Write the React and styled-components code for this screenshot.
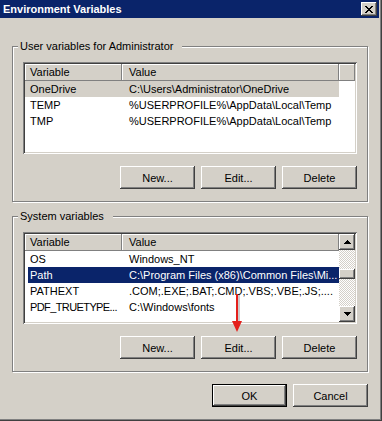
import React from 'react';
import styled, { createGlobalStyle, css } from 'styled-components';

const GlobalStyle = createGlobalStyle`
  html, body {
    margin: 0;
    padding: 0;
    background: #d4d0c8;
  }
  body {
    font-family: "Liberation Sans", Arial, sans-serif;
    font-size: 11px;
    color: #000;
  }
`;

const raised = css`
  box-shadow: inset -1px -1px #404040, inset 1px 1px #fff,
    inset -2px -2px #808080, inset 2px 2px #d4d0c8;
`;

const Window = styled.div`
  position: relative;
  width: 382px;
  height: 421px;
  box-sizing: border-box;
  padding: 0 3px 3px 0;
  background: #d4d0c8;
  box-shadow: inset -1px -1px #404040, inset -2px -2px #808080;
  display: flex;
  flex-direction: column;
  overflow: hidden;
`;

const TitleBar = styled.div`
  height: 18px;
  flex: none;
  display: flex;
  align-items: center;
  justify-content: space-between;
  padding: 0 2px 0 3px;
  background: #0a246a;
  color: #fff;
  font-weight: bold;
  font-size: 11px;
`;

const CloseButton = styled.button`
  width: 16px;
  height: 14px;
  padding: 0;
  border: 0;
  background: #d4d0c8;
  ${raised};
  display: flex;
  align-items: center;
  justify-content: center;
`;

const Body = styled.div`
  padding: 22px 11px 0 12px;
  display: flex;
  flex-direction: column;
`;

const Group = styled.fieldset`
  margin: 0 0 ${(p) => p.$gap || 0}px;
  padding: 9px 10px 12px;
  border: 1px solid #808080;
  box-shadow: inset 1px 1px #fff, 1px 1px #fff;
  min-width: 0;
`;

const Legend = styled.legend`
  margin-left: -5px;
  padding: 0 9px 0 2px;
  background: #d4d0c8;
  line-height: 13px;
  font-size: 11px;
`;

const ListView = styled.div`
  height: 92px;
  box-sizing: border-box;
  padding: 2px;
  background: #fff;
  box-shadow: inset 1px 1px #808080, inset -1px -1px #fff,
    inset 2px 2px #404040, inset -2px -2px #d4d0c8;
  display: flex;
`;

const ListBody = styled.div`
  flex: 1;
  min-width: 0;
  display: flex;
  flex-direction: column;
`;

const HeaderRow = styled.div`
  height: 17px;
  flex: none;
  display: flex;
`;

const HeaderCell = styled.div`
  width: ${(p) => p.$w || 0}px;
  flex: ${(p) => (p.$fill ? 1 : 'none')};
  box-sizing: border-box;
  padding-left: ${(p) => p.$pad || 0}px;
  background: #d4d0c8;
  box-shadow: inset -1px -1px #808080, inset 1px 1px #fff;
  line-height: 16px;
  white-space: nowrap;
  overflow: hidden;
`;

const Row = styled.div`
  display: flex;
  height: 16px;
  line-height: 16px;
  width: 314px;
  ${(p) =>
    p.$state === 'inactive' &&
    css`
      background: #d4d0c8;
    `}
  ${(p) =>
    p.$state === 'focus' &&
    css`
      margin-left: 3px;
      width: 311px;
      background: #0a246a;
      color: #fff;
      & > :first-child {
        margin-left: -3px;
      }
    `}
`;

const Cell = styled.div`
  width: ${(p) => p.$w}px;
  flex: none;
  box-sizing: border-box;
  padding-left: ${(p) => p.$pad}px;
  white-space: nowrap;
  overflow: hidden;
  letter-spacing: ${(p) => (p.$tight ? '-0.6px' : 'normal')};
`;

const ScrollBar = styled.div`
  width: 16px;
  flex: none;
  display: flex;
  flex-direction: column;
  background: repeating-conic-gradient(#d4d0c8 0 25%, #fff 0 50%) 0 0 / 2px 2px;
`;

const ScrollButton = styled.div`
  width: 16px;
  height: 16px;
  flex: none;
  background: #d4d0c8;
  ${raised};
  display: flex;
  align-items: center;
  justify-content: center;
`;

const Track = styled.div`
  flex: 1;
`;

const Thumb = styled.div`
  height: 10px;
  background: #d4d0c8;
  ${raised};
`;

const ButtonRow = styled.div`
  display: flex;
  justify-content: flex-end;
  gap: 6px;
  margin-top: 12px;
`;

const Button = styled.button`
  width: 75px;
  height: 23px;
  box-sizing: border-box;
  padding: 0;
  border: 0;
  background: #d4d0c8;
  font-family: "Liberation Sans", Arial, sans-serif;
  font-size: 11px;
  color: #000;
  ${raised};
  ${(p) =>
    p.$default &&
    css`
      border: 1px solid #000;
      box-shadow: inset -1px -1px #404040, inset 1px 1px #fff,
        inset -2px -2px #808080;
    `}
`;

const Pointer = styled.svg`
  position: absolute;
  left: 230px;
  top: 294px;
`;

const COLS = [
  { w: 97, pad: 5 },
  { w: 217, pad: 7 },
];

const userVars = [
  { name: 'OneDrive', value: 'C:\\Users\\Administrator\\OneDrive', state: 'inactive' },
  { name: 'TEMP', value: '%USERPROFILE%\\AppData\\Local\\Temp' },
  { name: 'TMP', value: '%USERPROFILE%\\AppData\\Local\\Temp' },
];

const systemVars = [
  { name: 'OS', value: 'Windows_NT' },
  { name: 'Path', value: 'C:\\Program Files (x86)\\Common Files\\Mi...', state: 'focus' },
  { name: 'PATHEXT', value: '.COM;.EXE;.BAT;.CMD;.VBS;.VBE;.JS;....' },
  { name: 'PDF_TRUETYPE...', value: 'C:\\Windows\\fonts', tight: true },
];

const xPixels = [
  [0, 0], [1, 0], [6, 0], [7, 0],
  [1, 1], [2, 1], [5, 1], [6, 1],
  [2, 2], [3, 2], [4, 2], [5, 2],
  [3, 3], [4, 3],
  [2, 4], [3, 4], [4, 4], [5, 4],
  [1, 5], [2, 5], [5, 5], [6, 5],
  [0, 6], [1, 6], [6, 6], [7, 6],
];

const CloseIcon = () => (
  <svg width="8" height="7" viewBox="0 0 8 7" shapeRendering="crispEdges">
    {xPixels.map(([x, y]) => (
      <rect key={`${x}-${y}`} x={x} y={y} width="1" height="1" fill="#000" />
    ))}
  </svg>
);

const Arrow = ({ down }) => (
  <svg width="7" height="4" viewBox="0 0 7 4" shapeRendering="crispEdges">
    <polygon points={down ? '0,0 7,0 3.5,4' : '3.5,0 7,4 0,4'} fill="#000" />
  </svg>
);

const VarList = ({ rows, scroll }) => (
  <ListView>
    <ListBody>
      <HeaderRow>
        <HeaderCell $w={97} $pad={5}>Variable</HeaderCell>
        <HeaderCell $w={217} $pad={7}>Value</HeaderCell>
        {!scroll && <HeaderCell $fill />}
      </HeaderRow>
      {rows.map((r) => (
        <Row key={r.name} $state={r.state}>
          <Cell $w={COLS[0].w} $pad={COLS[0].pad} $tight={r.tight}>{r.name}</Cell>
          <Cell $w={COLS[1].w} $pad={COLS[1].pad}>{r.value}</Cell>
        </Row>
      ))}
    </ListBody>
    {scroll && (
      <ScrollBar>
        <ScrollButton><Arrow /></ScrollButton>
        <Track>
          <Thumb style={{ marginTop: 19 }} />
        </Track>
        <ScrollButton><Arrow down /></ScrollButton>
      </ScrollBar>
    )}
  </ListView>
);

const Actions = () => (
  <ButtonRow>
    <Button>New...</Button>
    <Button>Edit...</Button>
    <Button>Delete</Button>
  </ButtonRow>
);

export default function App() {
  return (
    <>
      <GlobalStyle />
      <Window>
        <TitleBar>
          <span>Environment Variables</span>
          <CloseButton aria-label="Close">
            <CloseIcon />
          </CloseButton>
        </TitleBar>
        <Body>
          <Group $gap={8}>
            <Legend>User variables for Administrator</Legend>
            <VarList rows={userVars} />
            <Actions />
          </Group>
          <Group>
            <Legend>System variables</Legend>
            <VarList rows={systemVars} scroll />
            <Actions />
          </Group>
          <ButtonRow>
            <Button $default>OK</Button>
            <Button>Cancel</Button>
          </ButtonRow>
        </Body>
        <Pointer width="16" height="40" viewBox="0 0 16 40">
          <rect x="8" y="1" width="2" height="28" fill="#9a9a9a" opacity="0.5" />
          <rect x="6" y="0" width="2" height="28" fill="#e4201c" />
          <polygon points="2,27 12,27 7,38" fill="#e4201c" />
        </Pointer>
      </Window>
    </>
  );
}
